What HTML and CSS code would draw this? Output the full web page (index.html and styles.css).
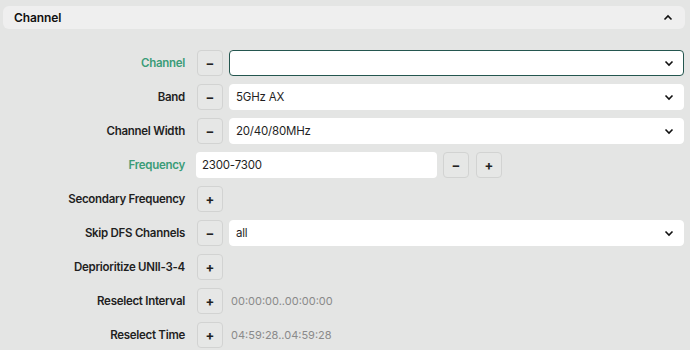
FILE: index.html
```html
<!DOCTYPE html>
<html>
<head>
<meta charset="utf-8">
<link rel="stylesheet" href="styles.css">
</head>
<body>
<div class="page">
  <div class="section-header">
    <span class="section-title">Channel</span>
    <svg class="caret" width="10" height="7" viewBox="0 0 10 7"><path d="M1.5 5.5 L5 2 L8.5 5.5" fill="none" stroke="#111" stroke-width="1.6"/></svg>
  </div>
  <div class="form">
    <div class="label accent">Channel</div>
    <div class="ctrl">
      <button class="btn">&minus;</button>
      <div class="select focused"><span class="value"></span><svg class="chev" width="10" height="7" viewBox="0 0 10 7"><path d="M1.5 1.5 L5 5 L8.5 1.5" fill="none" stroke="#111" stroke-width="1.6"/></svg></div>
    </div>

    <div class="label">Band</div>
    <div class="ctrl">
      <button class="btn">&minus;</button>
      <div class="select"><span class="value">5GHz AX</span><svg class="chev" width="10" height="7" viewBox="0 0 10 7"><path d="M1.5 1.5 L5 5 L8.5 1.5" fill="none" stroke="#111" stroke-width="1.6"/></svg></div>
    </div>

    <div class="label">Channel Width</div>
    <div class="ctrl">
      <button class="btn">&minus;</button>
      <div class="select"><span class="value">20/40/80MHz</span><svg class="chev" width="10" height="7" viewBox="0 0 10 7"><path d="M1.5 1.5 L5 5 L8.5 1.5" fill="none" stroke="#111" stroke-width="1.6"/></svg></div>
    </div>

    <div class="label accent">Frequency</div>
    <div class="ctrl">
      <div class="input"><span class="value">2300-7300</span></div>
      <button class="btn">&minus;</button>
      <button class="btn btn-next">+</button>
    </div>

    <div class="label">Secondary Frequency</div>
    <div class="ctrl">
      <button class="btn">+</button>
    </div>

    <div class="label">Skip DFS Channels</div>
    <div class="ctrl">
      <button class="btn">&minus;</button>
      <div class="select"><span class="value">all</span><svg class="chev" width="10" height="7" viewBox="0 0 10 7"><path d="M1.5 1.5 L5 5 L8.5 1.5" fill="none" stroke="#111" stroke-width="1.6"/></svg></div>
    </div>

    <div class="label">Deprioritize UNII-3-4</div>
    <div class="ctrl">
      <button class="btn">+</button>
    </div>

    <div class="label">Reselect Interval</div>
    <div class="ctrl">
      <button class="btn">+</button>
      <span class="hint">00:00:00..00:00:00</span>
    </div>

    <div class="label">Reselect Time</div>
    <div class="ctrl">
      <button class="btn">+</button>
      <span class="hint">04:59:28..04:59:28</span>
    </div>
  </div>
</div>
</body>
</html>
```
FILE: styles.css
```css
html, body {
  margin: 0;
  padding: 0;
  background: #e4e5e4;
  font-family: Inter, "Noto Sans", sans-serif;
  color: #1a1a1a;
}
.page {
  padding: 6px 5px 0 3px;
}
.section-header {
  height: 23px;
  background: #efefef;
  border-radius: 6px;
  display: flex;
  align-items: center;
  justify-content: space-between;
  padding: 0 12px 0 11px;
}
.section-title {
  font-size: 12px;
  font-weight: 600;
  color: #111;
  letter-spacing: -0.1px;
}
.caret { display: block; }
.form {
  margin-top: 21px;
  display: grid;
  grid-template-columns: 182px 1fr;
  column-gap: 12px;
  row-gap: 8px;
}
.label {
  text-align: right;
  font-size: 11.5px;
  font-weight: 600;
  letter-spacing: -0.28px;
  color: #1f1f1f;
  height: 26px;
  line-height: 26px;
  white-space: nowrap;
}
.label.accent { color: #3a9c78; }
.ctrl {
  display: flex;
  align-items: center;
  gap: 6px;
  height: 26px;
  margin-right: 1px;
}
.btn {
  width: 26px;
  height: 26px;
  box-sizing: border-box;
  border: 1px solid #d2d3d2;
  border-radius: 4px;
  background: #e6e7e6;
  font-family: Inter, sans-serif;
  font-size: 13px;
  font-weight: 700;
  color: #222;
  padding: 0;
  display: flex;
  align-items: center;
  justify-content: center;
  flex: none;
}
.btn-next { margin-left: 1px; }
.select {
  flex: 1;
  height: 26px;
  box-sizing: border-box;
  background: #fff;
  border: 1px solid #fff;
  border-radius: 4px;
  display: flex;
  align-items: center;
  justify-content: space-between;
  padding: 0 9px 0 6px;
}
.select.focused {
  border-color: #24564f;
}
.input {
  width: 241px;
  height: 26px;
  box-sizing: border-box;
  background: #fff;
  border-radius: 4px;
  display: flex;
  align-items: center;
  padding: 0 6px;
  margin-left: -1px;
}
.value {
  font-size: 11.5px;
  letter-spacing: -0.2px;
  color: #1f1f1f;
}
.chev { display: block; }
.hint {
  font-size: 11px;
  color: #8a8a8a;
  margin-left: 2px;
}
```
